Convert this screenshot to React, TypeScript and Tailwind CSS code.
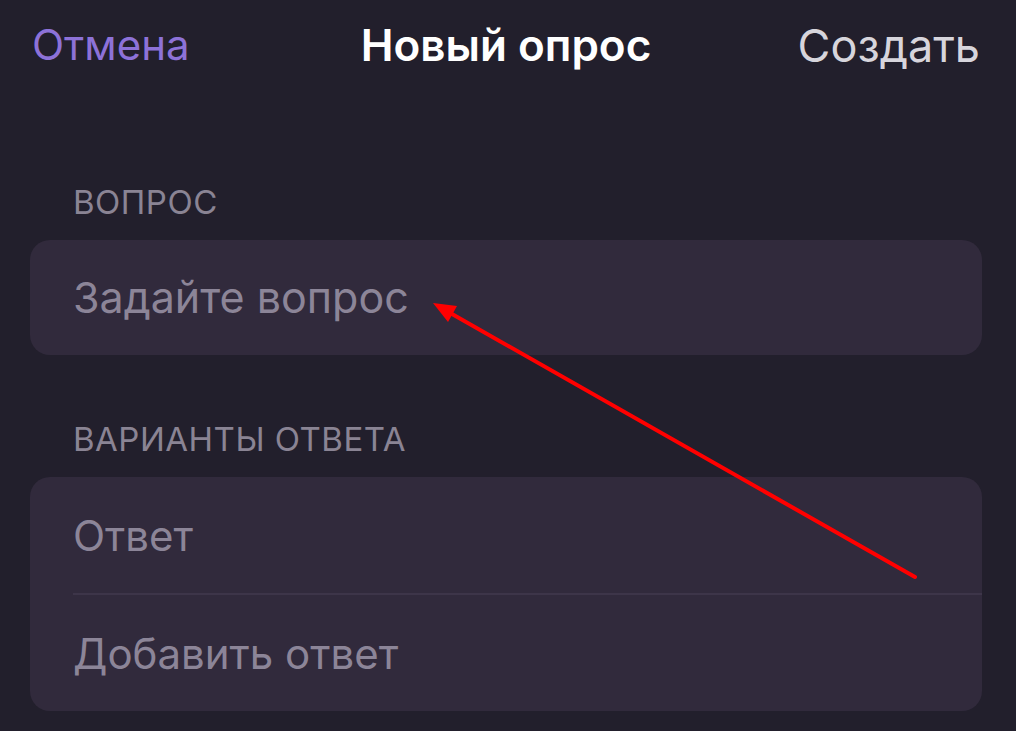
export default function App() {
  return (
    <div
      className="relative h-[731px] w-[1016px] overflow-hidden bg-[#221f2c]"
      style={{ fontFamily: 'Inter, "Noto Sans", sans-serif' }}
    >
      {/* nav bar */}
      <div className="grid h-[90px] grid-cols-[1fr_auto_1fr] items-center pl-[32px] pr-[36px] leading-none">
        <span className="text-[42px] text-[#8d72d8]">Отмена</span>
        <span className="text-[44px] font-semibold text-white">Новый опрос</span>
        <span className="justify-self-end text-[45px] text-[#d7d5dc]">Создать</span>
      </div>

      <div className="pl-[30px] pr-[34px]">
        <div className="pl-[43px] pt-[96px] text-[33px] leading-[32px] tracking-[0.5px] text-[#8a8494]">
          ВОПРОС
        </div>
        <div className="mt-[22px] flex h-[115px] items-center rounded-[20px] bg-[#312a3c] pl-[43px] text-[43px] text-[#8c8598]">
          Задайте вопрос
        </div>

        <div className="pl-[43px] pt-[68px] text-[33px] leading-[32px] tracking-[0.5px] text-[#8a8494]">
          ВАРИАНТЫ ОТВЕТА
        </div>
        <div className="mt-[22px] rounded-[20px] bg-[#312a3c] text-[42px] text-[#8c8598]">
          <div className="flex h-[116px] items-center pl-[43px]">Ответ</div>
          <div className="ml-[43px] h-[2px] bg-[#3d3549]" />
          <div className="flex h-[116px] items-center pl-[43px]">Добавить ответ</div>
        </div>
      </div>

      {/* red annotation arrow */}
      <svg className="pointer-events-none absolute inset-0" width="1016" height="731" viewBox="0 0 1016 731">
        <line x1="915" y1="577" x2="452" y2="314" stroke="#ff0000" strokeWidth="4" strokeLinecap="round" />
        <polygon points="433,303 457,306 448,322" fill="#ff0000" />
      </svg>
    </div>
  );
}
